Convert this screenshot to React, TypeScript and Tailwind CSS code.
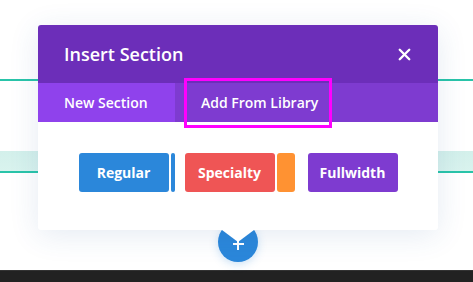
import { X } from 'lucide-react'

const font = { fontFamily: '"Open Sans", "Noto Sans", sans-serif' }

function LayoutButtons() {
  return (
    <div className="flex items-center justify-center">
      <div className="flex h-[39px] items-stretch">
        <div className="flex w-[90px] items-center justify-center rounded-[3px] bg-[#2b87da] text-[14px] font-bold text-white">
          Regular
        </div>
        <div className="ml-[2px] w-[4px] rounded-[2px] bg-[#2b87da]" />
      </div>
      <div className="ml-[10px] flex h-[39px] items-stretch">
        <div className="flex w-[90px] items-center justify-center rounded-[3px] bg-[#ef5555] text-[14px] font-bold text-white">
          Specialty
        </div>
        <div className="ml-[2px] w-[18px] rounded-[3px] bg-[#ff9232]" />
      </div>
      <div className="ml-[13px] flex h-[39px] w-[90px] items-center justify-center rounded-[3px] bg-[#7e3bd0] text-[14px] font-bold text-white">
        Fullwidth
      </div>
    </div>
  )
}

export default function App() {
  return (
    <div className="relative h-[282px] w-[473px] overflow-hidden bg-white" style={font}>
      {/* Page behind the modal */}
      <div className="flex h-full flex-col">
        <div className="h-[79px]" />
        <div className="h-[2px] bg-[#29c4a9]" />
        <div className="h-[70px]" />
        <div className="h-[20px] bg-gradient-to-b from-[#d3f0eb] to-[#d9f3ee]" />
        <div className="h-[2px] bg-[#29c4a9]" />
        <div className="flex-1" />
        <div className="h-[12px] border-t border-[#333] bg-[#222]" />
      </div>

      {/* Add section button */}
      <div className="absolute left-[218px] top-[222px] h-[40px] w-[40px] rounded-full bg-[#2b87da] shadow-[0_2px_8px_rgba(43,135,218,0.25)]">
        <div className="absolute left-[14.5px] top-[21px] h-[2px] w-[11px] bg-white" />
        <div className="absolute left-[19px] top-[16.5px] h-[11px] w-[2px] bg-white" />
      </div>

      {/* Insert Section modal */}
      <div className="absolute left-[38px] top-[25px] w-[400px] rounded-[3px] bg-white shadow-[0_5px_30px_rgba(43,87,154,0.12)]">
        <div className="flex h-[58px] items-center justify-between rounded-t-[3px] bg-[#6c2eb9] pl-[26px] pr-[24px]">
          <span className="text-[18px] font-semibold text-white">Insert Section</span>
          <X className="h-[19px] w-[19px] text-white" strokeWidth={3} />
        </div>
        <div className="flex h-[39px] bg-[#7e3bd0] text-[14px] font-semibold text-white">
          <div className="flex w-[137px] items-center bg-[#8f42ec] px-[26px]">New Section</div>
          <div className="flex items-center px-[26px]">Add From Library</div>
        </div>
        <div className="pb-[38px] pt-[31px]">
          <LayoutButtons />
        </div>
        <div className="absolute left-[184px] top-[205px] h-0 w-0 border-x-[16px] border-t-[12px] border-x-transparent border-t-white" />
      </div>

      {/* Highlight box */}
      <div className="absolute left-[184px] top-[78px] h-[50px] w-[148px] border-[3px] border-[#ff00ff]" />
    </div>
  )
}
